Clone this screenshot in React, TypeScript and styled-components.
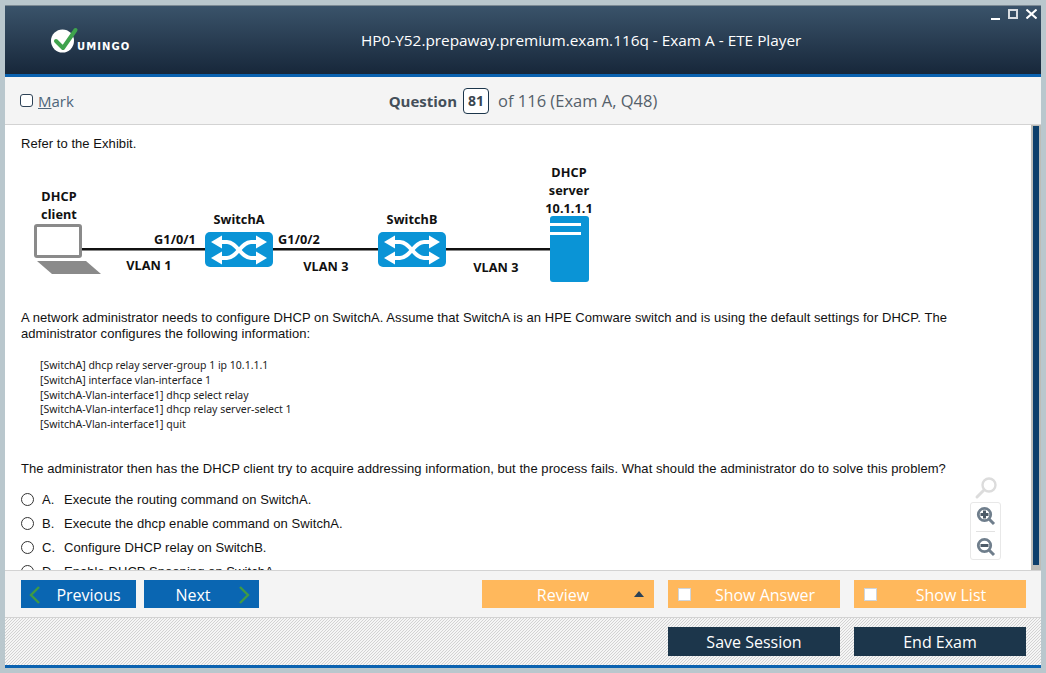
import React from "react";
import styled, { createGlobalStyle } from "styled-components";

const Global = createGlobalStyle`
  html, body { margin: 0; padding: 0; height: 100%; background: #b9c7cd; overflow: hidden; }
  #root { height: 100%; }
`;
const UI = `"Open Sans", "Noto Sans", sans-serif`;
const Arial = `"Liberation Sans", Arial, sans-serif`;

const Frame = styled.div`
  box-sizing: border-box;
  width: 1046px;
  height: 673px;
  padding: 5px 5px 5px 5px;
`;
const Win = styled.div`
  height: 663px;
  display: flex;
  flex-direction: column;
  background: #f4f4f4;
`;
const Header = styled.header`
  box-sizing: border-box;
  height: 72px;
  flex: none;
  display: flex;
  align-items: flex-start;
  background: linear-gradient(#3a536a 0%, #17273a 100%);
  border-top: 1px solid #7c8a94;
  border-bottom: 3px solid #0a62b0;
`;
const Logo = styled.div`
  display: flex;
  align-items: flex-end;
  margin: 21px 0 0 46px;
  width: 84px;
  height: 26px;
`;
const LogoWord = styled.span`
  font: bold 10px "DejaVu Sans", sans-serif;
  letter-spacing: 1.1px;
  color: #fff;
  line-height: 10px;
  margin-left: -2px;
  margin-bottom: 1px;
`;
const Title = styled.h1`
  margin: 25px 0 0 226px;
  font: 500 15.35px/18px ${UI};
  color: #fff;
  white-space: nowrap;
`;
const Controls = styled.div`
  margin-left: auto;
  display: flex;
  align-items: flex-start;
  gap: 8px;
  padding: 3px 4px 0 0;
`;
const MarkBar = styled.div`
  box-sizing: border-box;
  height: 48px;
  flex: none;
  display: grid;
  grid-template-columns: 1fr auto 1fr;
  align-items: center;
  padding: 0 15px;
  border-bottom: 1px solid #d3d3d3;
`;
const MarkLabel = styled.label`
  display: flex;
  align-items: center;
  gap: 5px;
  font: 400 15px/20px ${UI};
  color: #4d6579;
`;
const MarkBox = styled.span`
  box-sizing: border-box;
  width: 13px;
  height: 13px;
  border: 1px solid #2d4256;
  border-radius: 3px;
  background: #fff;
`;
const Underlined = styled.span`
  text-decoration: underline;
`;
const QuestionLine = styled.div`
  display: flex;
  align-items: center;
  font: 400 16.5px/20px ${UI};
  color: #55606a;
  white-space: nowrap;
`;
const QuestionWord = styled.b`
  font-size: 15px;
  font-weight: 700;
  color: #444f59;
`;
const QuestionNumber = styled.span`
  box-sizing: border-box;
  width: 26px;
  height: 26px;
  margin: 0 9px 0 6px;
  border: 1px solid #1c364b;
  border-radius: 4px;
  background: #fff;
  color: #3a4650;
  font-weight: 700;
  font-size: 14px;
  line-height: 24px;
  text-align: center;
`;
const ContentRow = styled.div`
  position: relative;
  flex: none;
  height: 445px;
  display: flex;
  background: #fff;
`;
const Scroller = styled.main`
  flex: 1;
  min-width: 0;
  overflow: hidden;
  padding: 11px 0 0 16px;
  font: 13px/16px ${Arial};
  letter-spacing: 0.06px;
  color: #111;
`;
const Para = styled.p`
  margin: 0;
  white-space: nowrap;
`;
const Diagram = styled.svg`
  display: block;
  margin: 8px 0 25px 0;
`;
const Code = styled.pre`
  margin: 16px 0 29px 19px;
  font: 10.5px/14.8px "Noto Sans", sans-serif;
  letter-spacing: 0;
  color: #222;
`;
const Options = styled.div`
  display: flex;
  flex-direction: column;
  gap: 8px;
  margin-top: 15px;
`;
const Option = styled.div`
  display: flex;
  align-items: center;
  height: 16px;
`;
const Radio = styled.span`
  box-sizing: border-box;
  width: 13px;
  height: 13px;
  border: 1px solid #333;
  border-radius: 50%;
  margin-right: 8px;
`;
const OptionKey = styled.span`
  width: 22px;
`;
const Track = styled.div`
  flex: none;
  width: 10px;
  box-sizing: border-box;
  padding: 1px 2px 5px 2px;
  background: #bdbdb8;
  display: flex;
`;
const Thumb = styled.div`
  flex: 1;
  background: #0d3f6b;
`;
const ZoomGlass = styled.svg`
  position: absolute;
  left: 969px;
  top: 351px;
`;
const ZoomBox = styled.div`
  position: absolute;
  left: 965px;
  top: 377px;
  box-sizing: border-box;
  width: 31px;
  height: 58px;
  display: flex;
  flex-direction: column;
  align-items: center;
  justify-content: space-around;
  background: #fff;
  border: 1px solid #e8e8e8;
  border-radius: 3px;
`;
const ZoomDivider = styled.div`
  width: 19px;
  height: 1px;
  background: #e2e2e2;
`;
const ActionBar = styled.div`
  box-sizing: border-box;
  flex: none;
  height: 48px;
  display: flex;
  align-items: center;
  padding: 0 15px 0 16px;
  border-top: 1px solid #d3d3d3;
  border-bottom: 1px solid #d3d3d3;
`;
const Btn = styled.button<{ $tone: "blue" | "orange" | "navy"; $w: number; $shift?: number }>`
  box-sizing: border-box;
  position: relative;
  width: ${(p) => p.$w}px;
  height: 28px;
  padding: 1px ${(p) => (p.$shift && p.$shift < 0 ? -p.$shift : 0)}px 0 ${(p) => (p.$shift && p.$shift > 0 ? p.$shift : 0)}px;
  border: 0;
  display: flex;
  align-items: center;
  justify-content: center;
  font: 400 16px/20px ${UI};
  color: #fff;
  background: ${(p) => (p.$tone === "blue" ? "#0a66b2" : p.$tone === "orange" ? "#ffb85c" : "#1c364b")};
`;
const NavIcon = styled.svg<{ $side: "left" | "right" }>`
  position: absolute;
  top: 6px;
  ${(p) => (p.$side === "left" ? "left: 8px;" : "right: 9px;")}
`;
const Caret = styled.span`
  position: absolute;
  right: 10px;
  top: 11px;
  border-left: 5px solid transparent;
  border-right: 5px solid transparent;
  border-bottom: 6px solid #2b4257;
`;
const Tick = styled.span`
  position: absolute;
  left: 10px;
  top: 8px;
  box-sizing: border-box;
  width: 13px;
  height: 13px;
  background: #fff;
  border: 1px solid #cfd4da;
`;
const NavGroup = styled.div`
  display: flex;
  gap: 8px;
`;
const RightGroup = styled.div`
  margin-left: auto;
  display: flex;
  gap: 14px;
`;
const Footer = styled.div`
  box-sizing: border-box;
  flex: none;
  height: 50px;
  display: flex;
  justify-content: flex-end;
  gap: 14px;
  padding: 9px 15px 0 0;
  background: linear-gradient(135deg, #d2d2d2 0 8%, #f5f5f5 8% 42%, #d2d2d2 42% 58%, #f5f5f5 58% 92%, #d2d2d2 92%) 0 0 / 3px 3px;
  border-bottom: 3px solid #0a62b0;
`;
const TallBtn = styled(Btn)`
  height: 29px;
`;
const DiagramText = styled.text`
  font: 700 12.7px "Noto Sans", sans-serif;
  fill: #111;
`;

const Arrows = ({ x }: { x: number }) => (
  <g transform={`translate(${x} 232)`}>
    <rect width="68" height="35" rx="5" fill="#0a94d6" />
    <g fill="none" stroke="#fff" strokeWidth="4">
      <path d="M12 10 H22 C32 10 36 26 46 26 H56" />
      <path d="M12 26 H22 C32 26 36 10 46 10 H56" />
    </g>
    <g fill="#fff">
      <path d="M6 10 L17 3.5 V16.5 Z" />
      <path d="M6 26 L17 19.5 V32.5 Z" />
      <path d="M62 10 L51 3.5 V16.5 Z" />
      <path d="M62 26 L51 19.5 V32.5 Z" />
    </g>
  </g>
);

const Chevron = ({ side }: { side: "left" | "right" }) => (
  <NavIcon $side={side} width="12" height="18" viewBox="0 0 12 18" fill="none" stroke="#3f9a45" strokeWidth="2.4">
    <path d={side === "left" ? "M10 1 L2 9 L10 17" : "M2 1 L10 9 L2 17"} />
  </NavIcon>
);

const Glass = ({ mark }: { mark: "plus" | "minus" }) => (
  <svg width="20" height="20" viewBox="0 0 20 20">
    <circle cx="8.5" cy="8.5" r="6.2" fill="#fff" stroke="#6f7e8c" strokeWidth="2.8" />
    <path d="M13 13 L18 18" stroke="#6f7e8c" strokeWidth="3" />
    <path d={mark === "plus" ? "M4.5 8.5 H12.5 M8.5 4.5 V12.5" : "M4.5 8.5 H12.5"} stroke="#4d5b68" strokeWidth="3" />
  </svg>
);

export default function App() {
  return (
    <Frame>
      <Global />
      <Win>
        <Header>
          <Logo>
            <svg width="28" height="26" viewBox="0 0 28 26">
              <circle cx="11.5" cy="14" r="11.5" fill="#fff" />
              <path d="M5 14 L12 21 L24.5 3" fill="none" stroke="#3fa34d" strokeWidth="4" strokeLinecap="round" strokeLinejoin="round" />
            </svg>
            <LogoWord>UMINGO</LogoWord>
          </Logo>
          <Title>HP0-Y52.prepaway.premium.exam.116q - Exam A - ETE Player</Title>
          <Controls>
            <svg width="9" height="12" viewBox="0 0 9 12"><rect y="9" width="9" height="2" fill="#fff" /></svg>
            <svg width="10" height="10" viewBox="0 0 10 10"><rect x="1" y="1" width="8" height="8" fill="none" stroke="#d8dde2" strokeWidth="2" /></svg>
            <svg width="11" height="10" viewBox="0 0 11 10"><path d="M0.5 0.5 L10.5 9.5 M10.5 0.5 L0.5 9.5" stroke="#fff" strokeWidth="2" /></svg>
          </Controls>
        </Header>
        <MarkBar>
          <MarkLabel>
            <MarkBox />
            <span><Underlined>M</Underlined>ark</span>
          </MarkLabel>
          <QuestionLine>
            <QuestionWord>Question</QuestionWord>
            <QuestionNumber>81</QuestionNumber>
            of 116 (Exam A, Q48)
          </QuestionLine>
          <span />
        </MarkBar>
        <ContentRow>
          <Scroller>
            <Para>Refer to the Exhibit.</Para>
            <Diagram width="600" height="125" viewBox="21 160 600 125">
              <g textAnchor="middle">
                <DiagramText x="59" y="201">DHCP</DiagramText>
                <DiagramText x="59" y="219">client</DiagramText>
                <DiagramText x="239" y="224">SwitchA</DiagramText>
                <DiagramText x="412" y="224">SwitchB</DiagramText>
                <DiagramText x="569" y="177">DHCP</DiagramText>
                <DiagramText x="569" y="195">server</DiagramText>
                <DiagramText x="569" y="213">10.1.1.1</DiagramText>
                <DiagramText x="175" y="244">G1/0/1</DiagramText>
                <DiagramText x="299" y="244">G1/0/2</DiagramText>
                <DiagramText x="149" y="270">VLAN 1</DiagramText>
                <DiagramText x="326" y="271">VLAN 3</DiagramText>
                <DiagramText x="496" y="272">VLAN 3</DiagramText>
              </g>
              <rect x="82" y="248" width="470" height="2.5" fill="#111" />
              <rect x="35.5" y="225.5" width="45" height="31" rx="1.5" fill="#fff" stroke="#8a8a8a" strokeWidth="3" />
              <path d="M37 261 H86 L101 274 H52 Z" fill="#8a8a8a" />
              <Arrows x={205} />
              <Arrows x={378} />
              <rect x="550" y="216" width="39" height="66" rx="3" fill="#0a94d6" />
              <rect x="550" y="223" width="31" height="3" fill="#fff" />
              <rect x="550" y="232" width="31" height="3" fill="#fff" />
            </Diagram>
            <Para>A network administrator needs to configure DHCP on SwitchA. Assume that SwitchA is an HPE Comware switch and is using the default settings for DHCP. The<br />administrator configures the following information:</Para>
            <Code>{`[SwitchA] dhcp relay server-group 1 ip 10.1.1.1
[SwitchA] interface vlan-interface 1
[SwitchA-Vlan-interface1] dhcp select relay
[SwitchA-Vlan-interface1] dhcp relay server-select 1
[SwitchA-Vlan-interface1] quit`}</Code>
            <Para>The administrator then has the DHCP client try to acquire addressing information, but the process fails. What should the administrator do to solve this problem?</Para>
            <Options>
              <Option><Radio /><OptionKey>A.</OptionKey>Execute the routing command on SwitchA.</Option>
              <Option><Radio /><OptionKey>B.</OptionKey>Execute the dhcp enable command on SwitchA.</Option>
              <Option><Radio /><OptionKey>C.</OptionKey>Configure DHCP relay on SwitchB.</Option>
              <Option><Radio /><OptionKey>D.</OptionKey>Enable DHCP Snooping on SwitchA.</Option>
            </Options>
          </Scroller>
          <Track><Thumb /></Track>
          <ZoomGlass width="24" height="24" viewBox="0 0 24 24">
            <circle cx="15" cy="9" r="6.5" fill="#fff" stroke="#dcdcdc" strokeWidth="2.4" />
            <path d="M10 14 L3 21" stroke="#dcdcdc" strokeWidth="3" strokeLinecap="round" />
          </ZoomGlass>
          <ZoomBox>
            <Glass mark="plus" />
            <ZoomDivider />
            <Glass mark="minus" />
          </ZoomBox>
        </ContentRow>
        <ActionBar>
          <NavGroup>
            <Btn $tone="blue" $w={115} $shift={20}><Chevron side="left" />Previous</Btn>
            <Btn $tone="blue" $w={115} $shift={-17}>Next<Chevron side="right" /></Btn>
          </NavGroup>
          <RightGroup>
            <Btn $tone="orange" $w={172} $shift={-10}>Review<Caret /></Btn>
            <Btn $tone="orange" $w={172} $shift={22}><Tick />Show Answer</Btn>
            <Btn $tone="orange" $w={172} $shift={22}><Tick />Show List</Btn>
          </RightGroup>
        </ActionBar>
        <Footer>
          <TallBtn $tone="navy" $w={172}>Save Session</TallBtn>
          <TallBtn $tone="navy" $w={172}>End Exam</TallBtn>
        </Footer>
      </Win>
    </Frame>
  );
}
